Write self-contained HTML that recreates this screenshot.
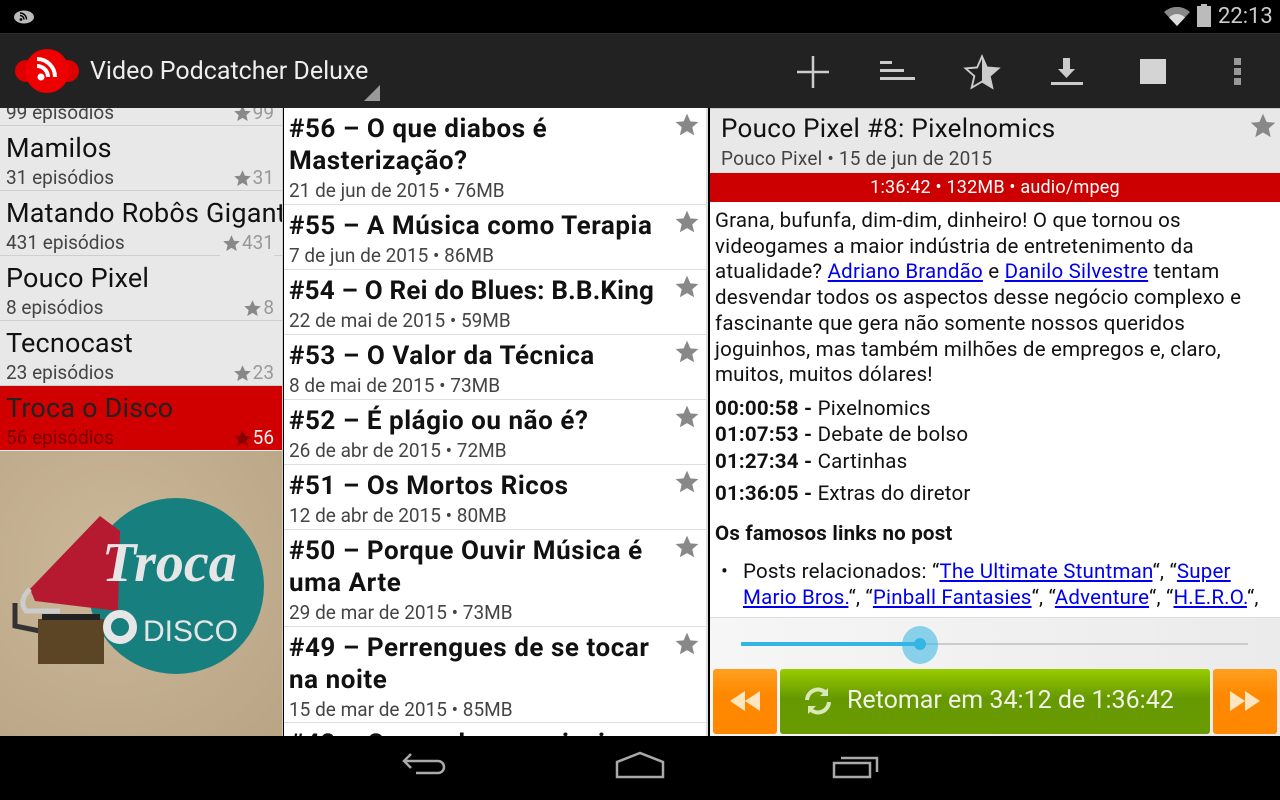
<!DOCTYPE html>
<html><head><meta charset="utf-8">
<style>
*{margin:0;padding:0;box-sizing:border-box}
body{width:1280px;height:800px;overflow:hidden;background:#000;font-family:"Roboto","Liberation Sans",sans-serif;position:relative}
.abs{position:absolute}
#status{left:0;top:0;width:1280px;height:33px;background:#000}
#bar{left:0;top:33px;width:1280px;height:75px;background:#222;border-top:1px solid #2c2c2c}
#left{left:0;top:108px;width:283px;height:628px;background:#e8e8e8;overflow:hidden;border-right:1px solid #ccc}
.li{position:absolute;left:0;width:283px;height:65px;border-bottom:1px solid #cfcfcf;padding:6px 0 0 6px}
.li .t{font-size:27px;line-height:32px;color:#111;white-space:nowrap;letter-spacing:.2px}
.li .s{font-size:19px;line-height:28px;color:#444}
.li .c{position:absolute;right:9px;top:39px;font-size:19px;line-height:26px;color:#999;display:flex;align-items:center}
.li .c svg{width:19px;height:19px;fill:#888;margin-right:1px}
#mid{left:284px;top:108px;width:424px;height:628px;background:#fff;overflow:hidden;border-right:2px solid #ddd}
.mi{position:absolute;left:0;width:424px;border-bottom:1px solid #ddd;padding:5px 40px 0 5px}
.mi .t{font-size:26px;line-height:32px;font-weight:bold;color:#111;letter-spacing:.55px}
.mi .d{font-size:19px;line-height:28px;color:#444}
.mi svg{position:absolute;right:8px;top:4px;width:26px;height:26px;fill:#888}
#right{left:710px;top:108px;width:570px;height:628px;background:#fff;overflow:hidden}
a{color:#00e;text-decoration:underline}
.body{position:absolute;left:5px;top:101px;width:565px;font-size:20.5px;line-height:25.7px;color:#111;white-space:nowrap;letter-spacing:.2px}
#nav{left:0;top:736px;width:1280px;height:64px;background:#000}
</style></head><body>
<svg width="0" height="0" style="position:absolute"><defs><path id="st" d="M12 1.5l3.1 7.1 7.4.6-5.6 4.9 1.7 7.4L12 17.6l-6.6 3.9 1.7-7.4-5.6-4.9 7.4-.6z"/></defs></svg>

<div id="status" class="abs">
 <svg class="abs" style="left:13px;top:8px" width="22" height="16" viewBox="0 0 22 16"><ellipse cx="11" cy="9" rx="10" ry="6.5" fill="#bbb"/><circle cx="8" cy="11.5" r="1.4" fill="#000"/><path d="M7 7.5a4 4 0 0 1 4 4M7 5a6.5 6.5 0 0 1 6.5 6.5" stroke="#000" stroke-width="1.5" fill="none"/></svg>
 <svg class="abs" style="left:1164px;top:7px" width="26" height="20" viewBox="0 0 26 20"><path d="M13 19L0 5a19 19 0 0 1 26 0z" fill="#888"/><path d="M13 19L5 10.5a11 11 0 0 1 16 0z" fill="#ddd"/></svg>
 <div class="abs" style="left:1197px;top:6px;width:14px;height:21px;background:#bbb"></div>
 <div class="abs" style="left:1201px;top:4px;width:6px;height:3px;background:#bbb"></div>
 <div class="abs" style="left:1218px;top:3px;font-size:22px;line-height:28px;color:#ccc">22:13</div>
</div>

<div id="bar" class="abs">
 <svg class="abs" style="left:14px;top:12px" width="66" height="50" viewBox="0 0 66 50"><circle cx="12" cy="25" r="11" fill="#d00"/><circle cx="54" cy="25" r="11" fill="#d00"/><circle cx="33" cy="25" r="22" fill="#e00"/><circle cx="27" cy="31" r="3.5" fill="#fff"/><path d="M23 20a11 11 0 0 1 11 11M23 13a18 18 0 0 1 18 18" stroke="#fff" stroke-width="4" fill="none"/></svg>
 <div class="abs" style="left:90px;top:22px;font-size:25px;line-height:32px;color:#eee">Video Podcatcher Deluxe</div>
 <div class="abs" style="left:364px;top:51px;width:0;height:0;border-left:16px solid transparent;border-bottom:16px solid #999"></div>
 <svg class="abs" style="left:796px;top:21px" width="34" height="34" viewBox="0 0 34 34"><path d="M17 1v32M1 17h32" stroke="#ccc" stroke-width="2.5"/></svg>
 <svg class="abs" style="left:879px;top:23px" width="36" height="28" viewBox="0 0 36 28"><rect x="1" y="4" width="12" height="3" fill="#ccc"/><rect x="1" y="12" width="24" height="3" fill="#ccc"/><rect x="1" y="20" width="35" height="3" fill="#ccc"/></svg>
 <svg class="abs" style="left:963px;top:20px" width="38" height="36" viewBox="0 0 24 23"><path d="M12 1.5l3.1 7.1 7.4.6-5.6 4.9 1.7 7.4L12 17.6l-6.6 3.9 1.7-7.4-5.6-4.9 7.4-.6z" fill="none" stroke="#ccc" stroke-width="1.2"/><path d="M12 1.5l3.1 7.1 7.4.6-5.6 4.9 1.7 7.4L12 17.6z" fill="#ccc"/></svg>
 <svg class="abs" style="left:1051px;top:24px" width="32" height="28" viewBox="0 0 32 28"><path d="M12 0h7v11h5l-8.5 9-8.5-9h5z" fill="#ccc"/><rect x="0" y="24" width="32" height="3" fill="#ccc"/></svg>
 <div class="abs" style="left:1140px;top:25px;width:26px;height:25px;background:#d4d4d4"></div>
 <div class="abs" style="left:1234px;top:24px;width:7px;height:7px;background:#999"></div>
 <div class="abs" style="left:1234px;top:34px;width:7px;height:7px;background:#999"></div>
 <div class="abs" style="left:1234px;top:44px;width:7px;height:7px;background:#999"></div>
</div>

<div id="left" class="abs">
 <div class="li" style="top:-47px"><div class="t">Anticast</div><div class="s">99 episódios</div><div class="c"><svg viewBox="0 0 24 24"><use href="#st"/></svg>99</div></div>
 <div class="li" style="top:18px"><div class="t">Mamilos</div><div class="s">31 episódios</div><div class="c"><svg viewBox="0 0 24 24"><use href="#st"/></svg>31</div></div>
 <div class="li" style="top:83px"><div class="t">Matando Robôs Gigantes</div><div class="s">431 episódios</div><div class="c" style="background:#e8e8e8;padding-left:2px"><svg viewBox="0 0 24 24"><use href="#st"/></svg>431</div></div>
 <div class="li" style="top:148px"><div class="t">Pouco Pixel</div><div class="s">8 episódios</div><div class="c"><svg viewBox="0 0 24 24"><use href="#st"/></svg>8</div></div>
 <div class="li" style="top:213px"><div class="t">Tecnocast</div><div class="s">23 episódios</div><div class="c"><svg viewBox="0 0 24 24"><use href="#st"/></svg>23</div></div>
 <div class="li" style="top:278px;background:#d00000;border-bottom:1px solid #eee"><div class="t" style="color:#222">Troca o Disco</div><div class="s" style="color:#7a0000">56 episódios</div><div class="c" style="color:#eee"><svg viewBox="0 0 24 24" style="fill:#800"><use href="#st"/></svg>56</div></div>
 <div class="abs" style="left:0;top:343px;width:283px;height:285px;background:radial-gradient(ellipse at 40% 40%,#cbb89a,#b9a584)">
  <svg width="283" height="285" viewBox="0 0 283 285">
   <circle cx="176" cy="135" r="88" fill="#17807f"/>
   <path d="M100 65 L120 80 L118 160 L35 150 L30 138 Z" fill="#b51a30"/>
   <path d="M30 138 Q18 150 26 160 L60 160" stroke="#ccc" stroke-width="5" fill="none"/>
   <path d="M15 152 L15 175 L40 180" stroke="#333" stroke-width="5" fill="none"/>
   <rect x="38" y="168" width="66" height="45" fill="#5c4524"/>
   <rect x="42" y="163" width="58" height="6" fill="#222"/>
   <text x="102" y="130" font-family="Liberation Serif,serif" font-style="italic" font-weight="bold" font-size="56" fill="#e6e6e6">Troca</text>
   <circle cx="120" cy="176" r="13" fill="none" stroke="#e6e6e6" stroke-width="8"/>
   <text x="143" y="190" font-family="Liberation Sans,sans-serif" font-size="30" fill="#e6e6e6">DISCO</text>
  </svg>
 </div>
</div>

<div id="mid" class="abs">
 <div class="mi" style="top:0;height:97px"><div class="t">#56 – O que diabos é Masterização?</div><div class="d">21 de jun de 2015 • 76MB</div><svg viewBox="0 0 24 24"><use href="#st"/></svg></div>
 <div class="mi" style="top:97px;height:65px"><div class="t">#55 – A Música como Terapia</div><div class="d">7 de jun de 2015 • 86MB</div><svg viewBox="0 0 24 24"><use href="#st"/></svg></div>
 <div class="mi" style="top:162px;height:65px"><div class="t" style="white-space:nowrap;letter-spacing:.2px">#54 – O Rei do Blues: B.B.King</div><div class="d">22 de mai de 2015 • 59MB</div><svg viewBox="0 0 24 24"><use href="#st"/></svg></div>
 <div class="mi" style="top:227px;height:65px"><div class="t">#53 – O Valor da Técnica</div><div class="d">8 de mai de 2015 • 73MB</div><svg viewBox="0 0 24 24"><use href="#st"/></svg></div>
 <div class="mi" style="top:292px;height:65px"><div class="t">#52 – É plágio ou não é?</div><div class="d">26 de abr de 2015 • 72MB</div><svg viewBox="0 0 24 24"><use href="#st"/></svg></div>
 <div class="mi" style="top:357px;height:65px"><div class="t">#51 – Os Mortos Ricos</div><div class="d">12 de abr de 2015 • 80MB</div><svg viewBox="0 0 24 24"><use href="#st"/></svg></div>
 <div class="mi" style="top:422px;height:97px"><div class="t">#50 – Porque Ouvir Música é uma Arte</div><div class="d">29 de mar de 2015 • 73MB</div><svg viewBox="0 0 24 24"><use href="#st"/></svg></div>
 <div class="mi" style="top:519px;height:96px"><div class="t">#49 – Perrengues de se tocar na noite</div><div class="d">15 de mar de 2015 • 85MB</div><svg viewBox="0 0 24 24"><use href="#st"/></svg></div>
 <div class="mi" style="top:615px;height:65px"><div class="t">#48 – Os mochos musicais</div></div>
</div>

<div id="right" class="abs">
 <div class="abs" style="left:0;top:0;width:570px;height:65px;background:#e8e8e8;border-top:1px solid #ccc;padding:4px 0 0 11px">
  <div style="font-size:26px;line-height:32px;color:#111;letter-spacing:.3px">Pouco Pixel #8: Pixelnomics</div>
  <div style="font-size:19px;line-height:28px;color:#444;letter-spacing:.2px">Pouco Pixel • 15 de jun de 2015</div>
  <svg class="abs" style="right:3px;top:3px" width="28" height="28" viewBox="0 0 24 24" fill="#888"><use href="#st"/></svg>
 </div>
 <div class="abs" style="left:0;top:65px;width:570px;height:29px;background:#cc0000;color:#fff;text-align:center;font-size:18px;line-height:29px;letter-spacing:.2px">1:36:42 • 132MB • audio/mpeg</div>
 <div class="body">
  <p>Grana, bufunfa, dim-dim, dinheiro! O que tornou os<br>videogames a maior indústria de entretenimento da<br>atualidade? <a>Adriano Brandão</a> e <a>Danilo Silvestre</a> tentam<br>desvendar todos os aspectos desse negócio complexo e<br>fascinante que gera não somente nossos queridos<br>joguinhos, mas também milhões de empregos e, claro,<br>muitos, muitos dólares!</p>
  <p style="margin-top:8px"><b>00:00:58 -</b> Pixelnomics<br><b>01:07:53 -</b> Debate de bolso<br><span style="display:block;margin-top:2px"><b>01:27:34 -</b> Cartinhas</span><span style="display:block;margin-top:6px"><b>01:36:05 -</b> Extras do diretor</span></p>
  <p style="margin-top:14px"><b>Os famosos links no post</b></p>
  <p style="margin-top:13px;padding-left:28px;position:relative"><span style="position:absolute;left:6px">•</span>Posts relacionados: “<a>The Ultimate Stuntman</a>“, “<a>Super</a><br><a>Mario Bros.</a>“, “<a>Pinball Fantasies</a>“, “<a>Adventure</a>“, “<a>H.E.R.O.</a>“,</p>
 </div>
 <div class="abs" style="left:0;top:509px;width:570px;height:119px;background:linear-gradient(90deg,#f6f6f6,#ebebeb);border-top:1px solid #ddd">
  <div class="abs" style="left:31px;top:25px;width:507px;height:2px;background:#ccc"></div>
  <div class="abs" style="left:31px;top:24px;width:180px;height:4px;background:#33b5e5"></div>
  <div class="abs" style="left:192px;top:8px;width:36px;height:38px;border-radius:50%;background:rgba(51,181,229,.55)"></div>
  <div class="abs" style="left:204px;top:20px;width:12px;height:12px;border-radius:50%;background:#33b5e5"></div>
  <div class="abs" style="left:3px;top:51px;width:64px;height:65px;border-radius:3px;background:linear-gradient(#ffa020,#ff8800 40%)">
   <svg class="abs" style="left:17px;top:22px" width="30" height="20" viewBox="0 0 30 20"><path d="M15 0v20L0 10zM30 0v20L15 10z" fill="#ffe6c0"/></svg></div>
  <div class="abs" style="left:70px;top:51px;width:430px;height:65px;border-radius:3px;background:linear-gradient(#99cc00,#669900 45%,#6a9a00)">
   <svg class="abs" style="left:22px;top:16px" width="32" height="32" viewBox="0 0 32 32" fill="none" stroke="#d9e8b8" stroke-width="4"><path d="M5 15a11 11 0 0 1 19-7"/><path d="M27 17a11 11 0 0 1-19 7"/><path d="M26 3v8h-8" fill="#d9e8b8" stroke="none"/><path d="M6 29v-8h8" fill="#d9e8b8" stroke="none"/></svg>
   <div class="abs" style="left:67px;top:15px;font-size:25px;line-height:34px;color:#f2f2e8">Retomar em 34:12 de 1:36:42</div></div>
  <div class="abs" style="left:503px;top:51px;width:64px;height:65px;border-radius:3px;background:linear-gradient(#ffa020,#ff8800 40%)">
   <svg class="abs" style="left:17px;top:22px" width="30" height="20" viewBox="0 0 30 20"><path d="M0 0v20L15 10zM15 0v20L30 10z" fill="#ffe6c0"/></svg></div>
 </div>
</div>

<div id="nav" class="abs">
 <svg class="abs" style="left:400px;top:16px" width="48" height="28" viewBox="0 0 48 28" fill="none" stroke="#aaa" stroke-width="2.5"><path d="M4 9h34a6 6 0 0 1 0 12H16"/><path d="M11 2L4 9l7 7"/></svg>
 <svg class="abs" style="left:615px;top:15px" width="50" height="28" viewBox="0 0 50 28" fill="none" stroke="#aaa" stroke-width="2.5"><path d="M2 26V11L25 2l23 9v15z"/></svg>
 <svg class="abs" style="left:832px;top:16px" width="48" height="28" viewBox="0 0 48 28" fill="none" stroke="#aaa" stroke-width="2.5"><rect x="2" y="11" width="36" height="14"/><path d="M9 6h36v14"/></svg>
</div>
</body></html>
